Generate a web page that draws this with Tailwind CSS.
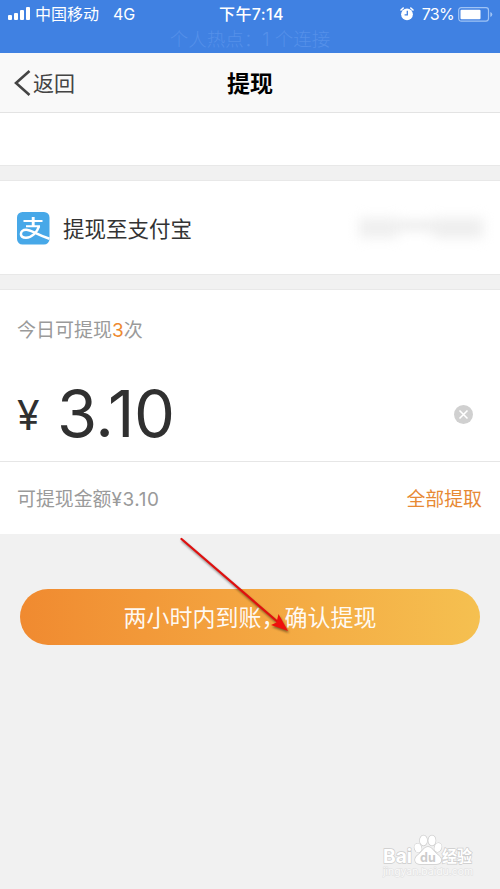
<!DOCTYPE html>
<html lang="zh-CN">
<head>
<meta charset="utf-8">
<title>提现</title>
<script src="https://cdn.jsdelivr.net/npm/@tailwindcss/browser@4"></script>
</head>
<body class="relative flex h-[889px] w-[500px] flex-col overflow-hidden bg-[#f1f1f1] font-[Inter,'Noto_Sans_CJK_SC',sans-serif] text-[#333]">
  <header class="h-[53px] shrink-0 bg-[#4081e2] text-white">
    <div class="grid h-[28px] grid-cols-3 items-center pl-[8px] pr-[7px] text-[16px] leading-[28px]">
      <div class="flex items-center whitespace-nowrap">
        <svg class="mr-[5px] h-[14px] w-[22px]" viewBox="0 0 22 14" fill="#fff"><rect x="0" y="8" width="4" height="5" rx="1"/><rect x="6" y="6" width="4" height="7" rx="1"/><rect x="12" y="3" width="4" height="10" rx="1"/><rect x="18" y="0" width="4" height="13" rx="1"/></svg>
        <span class="mr-[14px]">中国移动</span><span>4G</span>
      </div>
      <div class="pl-[2px] text-center font-medium tracking-[0.4px] whitespace-nowrap">下午7:14</div>
      <div class="flex items-center justify-end">
        <svg class="mr-[8px] h-[14px] w-[14px]" viewBox="0 0 14 14"><circle cx="7" cy="7.3" r="5.9" fill="#fff"/><path d="M1 3 3.2 1M13 3 10.8 1" stroke="#fff" stroke-width="1.6" stroke-linecap="round"/><path d="M7.3 3.8v4H4.6" fill="none" stroke="#4081e2" stroke-width="1.3"/></svg>
        <span class="mr-[4px] tracking-[-0.7px]">73%</span>
        <svg class="h-[15px] w-[35px]" viewBox="0 0 35 15"><rect x=".7" y=".7" width="29.8" height="13.4" rx="2.5" fill="none" stroke="#9fc3f5" stroke-width="1.2"/><rect x="2.5" y="2.8" width="20" height="9.4" rx="1" fill="#fff"/><path d="M32.3 5v5q2-.8 2-2.5t-2-2.5Z" fill="#9fc3f5"/></svg>
      </div>
    </div>
    <div class="flex h-[22px] items-center justify-center text-[18.5px] leading-[22px] font-light text-[#5590e9]">个人热点：1 个连接</div>
  </header>
  <nav class="grid h-[60px] shrink-0 grid-cols-3 items-center border-b border-[#e3e3e3] bg-[#f9f9f9] pr-[14px] pl-[14px]">
    <div class="flex items-center text-[21px] leading-[30px]">
      <svg class="mr-[2px] h-[26px] w-[17px]" viewBox="0 0 17 26" fill="none" stroke="#444" stroke-width="2.6"><path d="M15.5 1 2 13l13.5 12"/></svg><span class="pt-[2px] text-[#444]">返回</span>
    </div>
    <h1 class="pt-[2px] text-center text-[23px] leading-[30px] font-bold text-black">提现</h1>
  </nav>
  <section class="h-[53px] shrink-0 border-b border-[#e8e8e8] bg-white"></section>
  <section class="mt-[14px] flex h-[95px] shrink-0 items-center border-y border-[#e8e8e8] bg-white pt-[1px] pr-[17px] pl-[17px]">
    <svg class="mr-[13px] h-[33px] w-[33px]" viewBox="0 0 33 33"><rect width="32.5" height="32.5" rx="5.5" fill="#47a8e8"/><g fill="none" stroke="#fff"><path d="M6.5 9h19M9 14.3h14" stroke-width="2.1"/><path d="M16.2 5v9.5" stroke-width="2.9"/><path d="M22 14.3C20 20.5 14.5 25.7 9 25.7c-3.7 0-5.1-1.7-5.1-3.7 0-2.4 2.2-4.2 5.2-4.2 5.3 0 8.9 4.2 23.4 9" stroke-width="2.5"/></g></svg>
    <span class="pt-[2px] text-[21.5px] leading-[32px]">提现至支付宝</span>
    <div class="ml-auto flex h-[22px] w-[124px] items-center justify-between blur-[6px]"><i class="h-[20px] w-[39px] bg-[#efefef]"></i><i class="mb-[5px] h-[9px] w-[35px] bg-[#eaeaea]"></i><i class="h-[20px] w-[50px] bg-[#eeeeee]"></i></div>
  </section>
  <main class="mt-[14px] h-[245px] shrink-0 border-t border-[#e8e8e8] bg-white">
    <p class="pt-[27px] pl-[17px] text-[19px] leading-[28px] text-[#9a9a9a]">今日可提现<span class="text-[#ee8a2f]">3</span>次</p>
    <div class="flex h-[117px] items-center border-b border-[#e6e6e6] pt-[21px] pr-[27px] pl-[17px] text-[#303030]">
      <span class="mt-[2px] w-[40px] text-[41px] leading-[60px]">¥</span>
      <span class="text-[65px] leading-[70px] tracking-[-0.4px]">3.10</span>
      <svg class="mt-[1px] ml-auto h-[19px] w-[19px]" viewBox="0 0 19 19"><circle cx="9.5" cy="9.5" r="9.5" fill="#d0d0d0"/><path d="m5.5 5.5 8 8m0-8-8 8" stroke="#fff" stroke-width="1.6"/></svg>
    </div>
    <div class="flex h-[72px] items-center justify-between pt-[4px] pr-[18px] pl-[17px] text-[18.9px] leading-[28px] text-[#9a9a9a]">
      <span>可提现金额<span class="tracking-[0.6px]">¥3.10</span></span><span class="text-[#e78934]">全部提取</span>
    </div>
  </main>
  <button class="mx-[20px] mt-[55px] flex h-[56px] shrink-0 items-center justify-center rounded-full bg-linear-to-r from-[#f08a30] to-[#f5c050] pt-[1px] text-[23px] leading-[34px] text-white/95">两小时内到账，确认提现</button>
  <svg class="absolute top-[530px] left-[175px] h-[110px] w-[125px] drop-shadow-[1px_2px_1px_rgba(0,0,0,0.45)]" viewBox="0 0 125 110"><path d="M6.5 9 104 93" stroke="#df100f" stroke-width="2.3" stroke-linecap="round"/><path d="m113 101-17-6 5.500-2.500 2-8.500Z" fill="#ef100c"/></svg>
  <div class="absolute top-[833px] left-[382px] w-[96px]">
    <svg class="h-[48px] w-[96px]" viewBox="0 0 96 48" fill="#fff" stroke="#cccccc" stroke-width="1.3">
      <g font-family="Inter, 'Noto Sans CJK SC', sans-serif" font-weight="700" paint-order="stroke">
        <text x="1" y="30" font-size="19" textLength="29" lengthAdjust="spacingAndGlyphs">Bai</text>
        <ellipse cx="36" cy="15" rx="3.4" ry="4.4" transform="rotate(-20 36 15)"/><ellipse cx="41.5" cy="7.5" rx="3.6" ry="5"/><ellipse cx="50" cy="7.5" rx="3.6" ry="5"/><ellipse cx="56" cy="14.5" rx="3.4" ry="4.4" transform="rotate(20 56 14.5)"/>
        <path d="M46 14c-4 0-6 5-10 8-5 4-3 9 2 9h16c6 0 7-5 2-9-4-3-6-8-10-8Z"/>
        <text x="38" y="28.5" font-size="12.5" fill="#cccccc" stroke="none">du</text>
        <text x="60" y="29" font-size="15.5" textLength="30" lengthAdjust="spacingAndGlyphs">经验</text>
        <text x="1" y="42" font-size="9.5" font-weight="400" fill="#fafafa" stroke="#e0e0e0" stroke-width="1" textLength="90" lengthAdjust="spacingAndGlyphs">jingyan.baidu.com</text>
      </g>
    </svg>
  </div>
</body>
</html>
